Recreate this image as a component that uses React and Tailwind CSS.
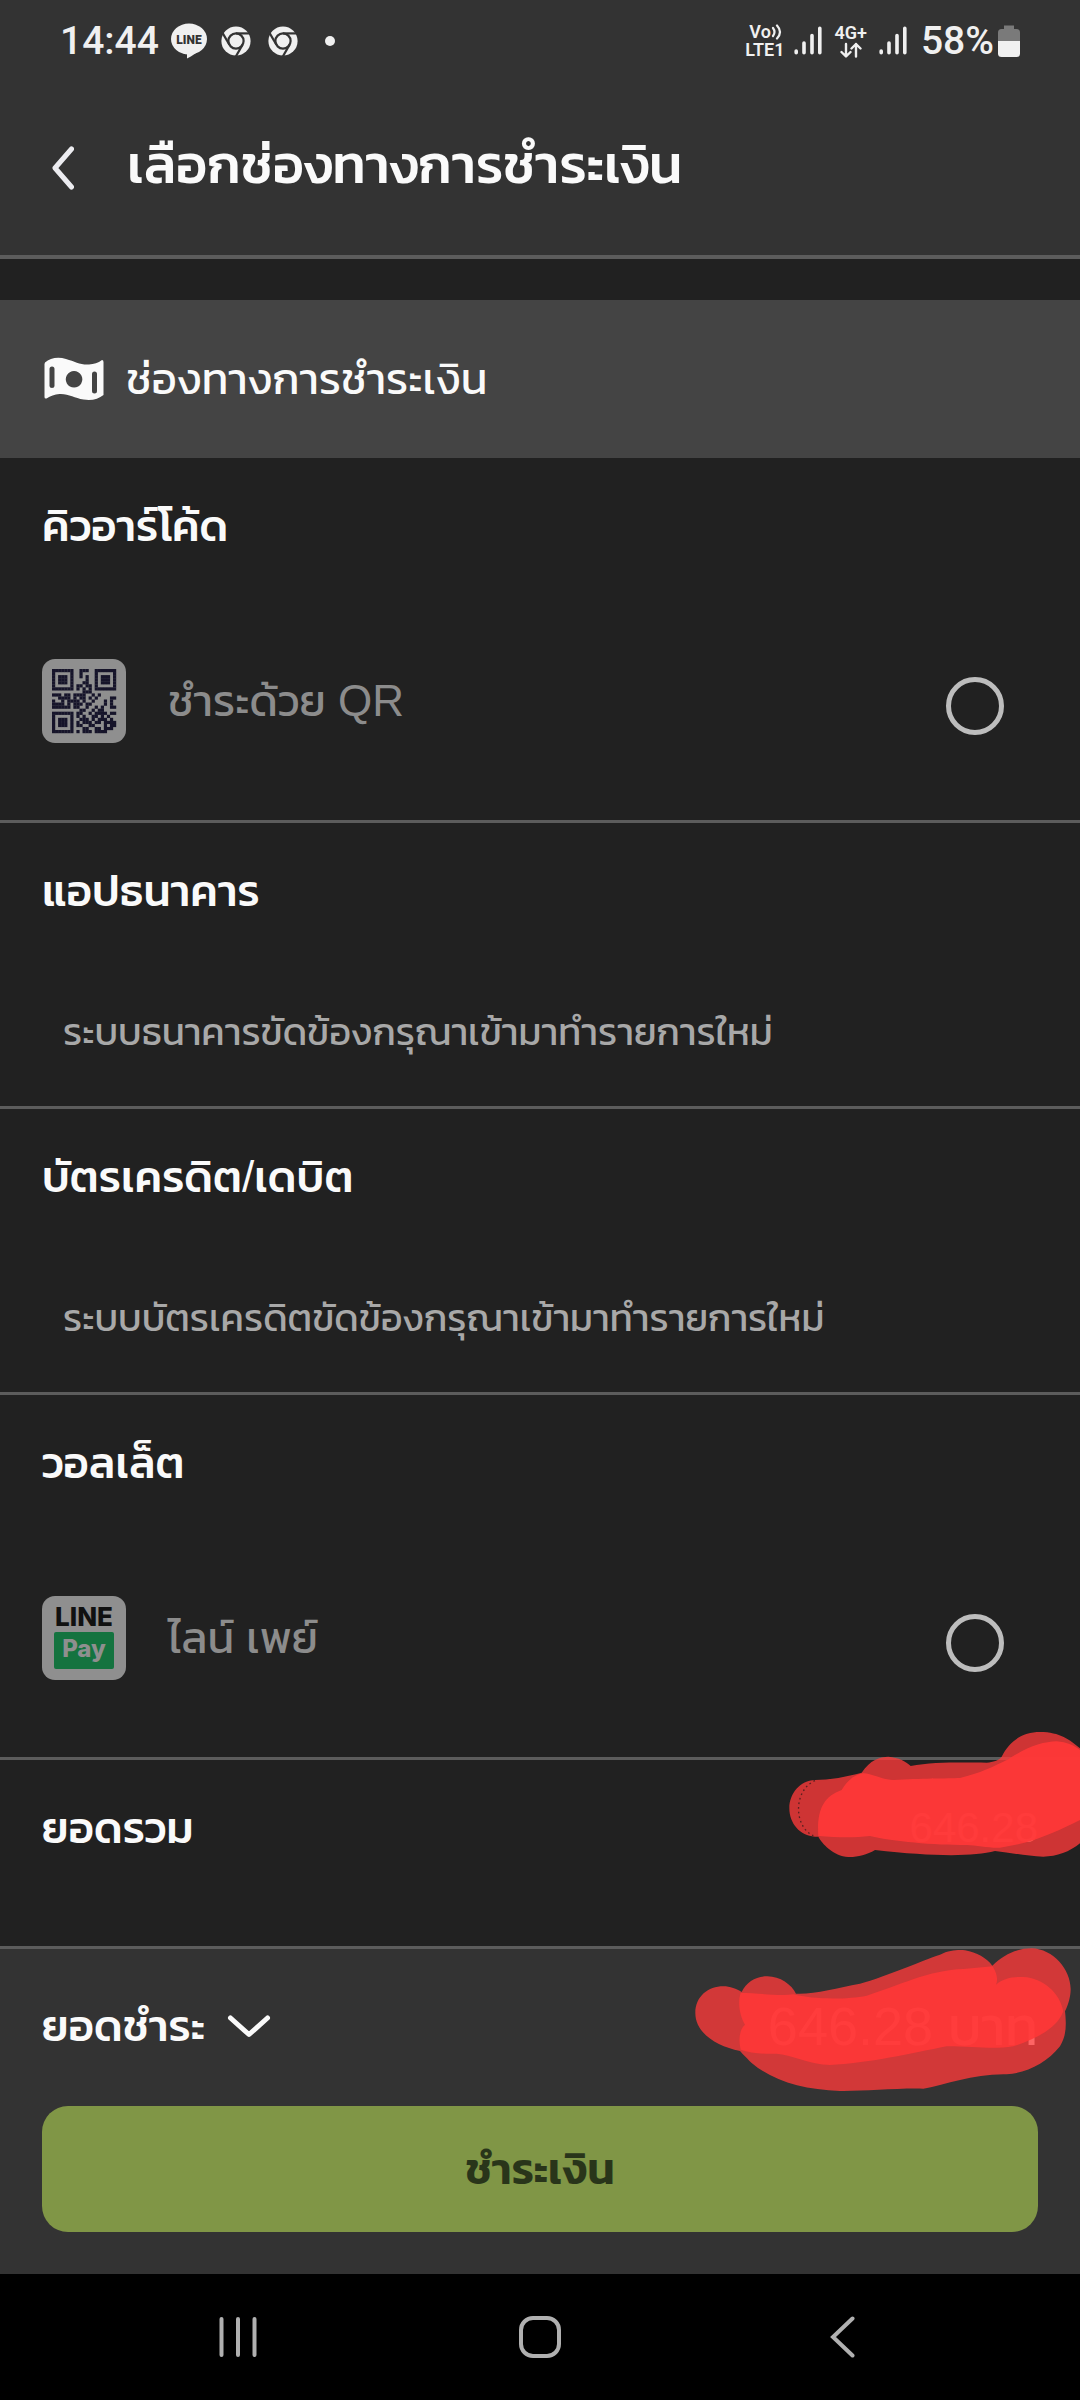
import { useState } from 'react';

const QR_ROWS = [
  '#######..###..#######',
  '#.....#..#....#.....#',
  '#.###.#..#.#..#.###.#',
  '#.###.#....#..#.###.#',
  '#.###.#...##..#.###.#',
  '#.....#.##.##.#.....#',
  '#######.#.#.#.#######',
  '..........###........',
  '###.##.####..#.#.....',
  '..####.#.##.#.#....##',
  '#..#.####.#..#...#.#.',
  '####.#.###.##....#.#.',
  '######.##..#..#.#..##',
  '.........##..#.##....',
  '#######.##..#.####.##',
  '#.....#.#.#..##.#.#..',
  '#.###.#..###.#.###.#.',
  '#.###.#.#.###.##.####',
  '#.###.#.##..##...#.##',
  '#.....#...##..##.###.',
  '#######.#.###.####...',
];

function QrIcon() {
  return (
    <svg viewBox="0 0 84 84" className="size-21 shrink-0 rounded-[13px] bg-[#8f8f8f]" aria-hidden="true">
      <g transform="translate(10 10) scale(3.050)" fill="#16142a">
        {QR_ROWS.map((row, y) =>
          row.split('').map((cell, x) =>
            cell === '#' ? <rect key={`${x}-${y}`} x={x} y={y} width="1.050" height="1.050" /> : null
          )
        )}
      </g>
    </svg>
  );
}

function LinePayIcon() {
  return (
    <svg viewBox="0 0 84 84" className="size-21 shrink-0 rounded-[13px] bg-[#8f8f8f] font-['Inter',sans-serif]" aria-hidden="true">
      <text x="42" y="30" textAnchor="middle" fontSize="26" fontWeight="800" fill="#111">LINE</text>
      <rect x="12" y="36" width="60" height="37" rx="2" fill="#14733f" />
      <text x="42" y="61" textAnchor="middle" fontSize="24" fontWeight="800" fill="#8f8f8f">Pay</text>
    </svg>
  );
}

function LineBubble() {
  return (
    <svg viewBox="0 0 36 36" className="size-9 font-['Roboto',sans-serif]" aria-hidden="true">
      <ellipse cx="18" cy="16" rx="18" ry="15.500" fill="#f0f0f0" />
      <path d="M16 30v5.500c5-2.500 10.500-6 14-10z" fill="#f0f0f0" />
      <text x="18" y="20.500" textAnchor="middle" fontSize="12" fontWeight="900" fill="#333">LINE</text>
    </svg>
  );
}

function ChromeIcon() {
  return (
    <svg viewBox="-15 -15 30 30" className="size-[30px]" aria-hidden="true">
      <circle r="14.600" fill="#f0f0f0" />
      <g fill="none" stroke="#333" strokeWidth="2.200">
        <circle r="7.600" />
        <path d="M0-7.600H15" />
        <path d="M0-7.600H15" transform="rotate(120)" />
        <path d="M0-7.600H15" transform="rotate(240)" />
      </g>
    </svg>
  );
}

function SignalBars() {
  return (
    <svg viewBox="0 0 28 30" className="h-[30px] w-7" stroke="#f0f0f0" strokeWidth="3.600" strokeLinecap="round" aria-hidden="true">
      <path d="M2.200 25v1.800M10 17v9.800M18 9.500v17.300M25.800 2.200v24.600" />
    </svg>
  );
}

function StatusBar() {
  return (
    <div className="flex h-[82px] items-center justify-between px-[60px] font-['Roboto',sans-serif] text-[#f0f0f0]">
      <div className="flex items-center">
        <span className="text-[39px] leading-none font-medium">14:44</span>
        <span className="ml-3"><LineBubble /></span>
        <span className="ml-[14px]"><ChromeIcon /></span>
        <span className="ml-[17px]"><ChromeIcon /></span>
        <span className="ml-[27px] size-[10px] rounded-full bg-[#f0f0f0]" />
      </div>
      <div className="flex items-center">
        <div className="flex flex-col text-[18px] leading-[18px] font-semibold">
          <span className="flex items-center pl-1">
            Vo
            <svg viewBox="0 0 12 16" className="h-4 w-3" fill="none" stroke="#f0f0f0" strokeWidth="2.200" strokeLinecap="round" aria-hidden="true">
              <path d="M2 4q3 4 0 8M6 1.500q6 6.500 0 13" />
            </svg>
          </span>
          <span>LTE1</span>
        </div>
        <span className="ml-[10px]"><SignalBars /></span>
        <div className="ml-3 flex flex-col items-center text-[18px] leading-[18px] font-semibold">
          <span>4G+</span>
          <svg viewBox="0 0 24 16" className="h-4 w-6" fill="none" stroke="#f0f0f0" strokeWidth="2.400" strokeLinecap="round" strokeLinejoin="round" aria-hidden="true">
            <path d="M7 2v12M2.500 10 7 14.500 11.500 10M17 14.500V2M12.500 6.500 17 2l4.500 4.500" />
          </svg>
        </div>
        <span className="ml-3"><SignalBars /></span>
        <span className="ml-[14px] text-[39px] leading-none font-medium">58%</span>
        <svg viewBox="0 0 22 34" className="ml-1 h-[34px] w-[22px]" aria-hidden="true">
          <path d="M6 1.500h10V5h2.500Q22 5 22 8.500V18H0V8.500Q0 5 3.500 5H6z" fill="#7a7a7a" />
          <path d="M0 17h22v12.500q0 3.500-3.500 3.500h-15Q0 33 0 29.500z" fill="#f0f0f0" />
        </svg>
      </div>
    </div>
  );
}

function Section({ title, children }) {
  return (
    <section className="border-b-3 border-[#5c5c5c] px-[42px] pt-[38px]">
      <h2 className="text-[44px] leading-[60px] font-medium">{title}</h2>
      {children}
    </section>
  );
}

function PaymentOption({ id, icon, label, selected, onSelect }) {
  return (
    <label htmlFor={id} className="flex items-center pt-[103px] pb-[77px]">
      {icon}
      <span className="ml-[42px] flex-1 text-[44px] leading-[84px] text-[#8c8c8c]">{label}</span>
      <input
        id={id}
        type="radio"
        name="payment"
        checked={selected === id}
        onChange={() => onSelect(id)}
        className="mt-[10px] mr-[34px] size-[58px] appearance-none rounded-full border-5 border-[#bdbdbd] checked:bg-[#809646]"
      />
    </label>
  );
}

function ErrorMessage({ children }) {
  return <p className="px-[21px] pt-[81px] pb-11 text-[38px] leading-[60px] text-[#a8a8a8]">{children}</p>;
}

function TotalScribble() {
  return (
    <svg viewBox="300 60 900 390" className="absolute right-0 -top-[30px] h-[130px] w-[300px]" aria-hidden="true">
      <path fill="#ff3a3a" fillOpacity="0.78" d="M405 210C450 210 500 200 545 188C570 150 600 140 625 140C655 142 680 155 692 168C760 155 850 158 920 158C940 156 955 152 965 140C990 90 1030 66 1080 66C1140 66 1170 90 1200 115V400C1170 425 1130 440 1090 440C1040 438 990 428 945 423C880 440 760 440 585 420C560 435 530 442 505 441C460 438 425 400 415 380H405C360 378 328 340 328 295C328 250 360 212 405 210Z" />
      <path fill="#ff3737" fillOpacity="0.92" d="M485 240C500 215 520 195 548 190C570 188 600 208 640 210C720 205 800 206 840 204C900 190 940 170 985 148C1040 110 1090 95 1130 94C1160 96 1185 108 1200 120V330C1140 360 1060 400 960 413C930 415 890 406 860 405C760 405 640 395 570 378C520 384 470 382 415 378C410 300 430 260 485 240Z" />
      <path fill="none" stroke="#5a2020" strokeWidth="4" strokeDasharray="5 9" d="M405 212C340 240 340 350 400 377" />
    </svg>
  );
}

function PayableScribble() {
  return (
    <svg viewBox="0 700 1200 450" className="absolute -top-1.5 right-0 h-[150px] w-[400px]" aria-hidden="true">
      <path fill="#ff3a3a" fillOpacity="0.78" d="M130 830C150 830 170 838 185 847C200 815 230 800 262 800C300 800 335 825 348 852C400 855 470 835 540 822C620 800 720 755 780 735C810 720 840 720 855 722C890 728 920 745 937 768C970 735 1010 716 1055 716C1120 718 1172 780 1172 838C1172 860 1165 885 1155 905C1160 950 1158 980 1140 1010C1100 1060 1040 1090 980 1094C880 1092 800 1125 730 1137C650 1135 550 1145 480 1144C370 1140 280 1115 215 1060C195 1040 185 1030 180 1024C110 1010 46 970 46 910C46 860 85 830 130 830Z" />
      <path fill="#ff3737" fillOpacity="0.88" d="M182 850C240 850 300 860 340 854C400 870 500 870 560 858C650 830 750 780 850 778L938 770C950 790 955 810 948 825C970 805 1000 801 1030 802C1090 805 1140 850 1150 905C1130 960 1060 990 1000 1010C940 1020 880 1010 800 1010C700 1030 560 1062 450 1066C390 1064 330 1035 290 1032C250 1034 210 1030 182 1020C175 990 178 960 195 945C180 920 172 880 182 850Z" />
    </svg>
  );
}

export default function App() {
  const [selected, setSelected] = useState('');

  return (
    <div className="flex min-h-screen flex-col bg-[#212121] font-['Liberation_Sans','Kanit','Prompt',sans-serif] text-[#fafafa]">
      {/* Header */}
      <header className="border-b-4 border-[#5c5c5c] bg-[#333]">
        <StatusBar />
        <div className="flex h-[173px] items-start pt-11 pl-[52px]">
          <button type="button" aria-label="ย้อนกลับ" className="pt-5">
            <svg viewBox="0 0 22 44" className="h-11 w-[22px]" fill="none" stroke="#ececf0" strokeWidth="5" strokeLinecap="round" strokeLinejoin="round">
              <path d="M19.500 3 3 22l16.500 19" />
            </svg>
          </button>
          <h1 className="ml-[53px] text-[54px] leading-[76px] font-medium">เลือกช่องทางการชำระเงิน</h1>
        </div>
      </header>

      <main className="flex-1">
        <div className="mt-[41px] flex h-[158px] items-center bg-[#444] pl-11">
          <svg viewBox="0 0 60 44" className="h-11 w-[60px]" aria-hidden="true">
            <path
              fill="#fafafa"
              fillRule="evenodd"
              d="M1 5.500C6 1 14-.500 22 2c9 2.500 14 6 23 5.500 5-.300 9-1.500 13-4.500q1.500 0 1.500 2V38c-5 4-12 6-20 4.500-9-1.500-15-6-24-5.500-5 .300-9 2-13 4.500Q.500 42 .500 40V7zM5.500 12v17q0 2 2.500 2t2.500-2V12q0-2.500-2.500-2.500T5.500 12zM48 17v17q0 2.500 2.500 2.500T53 34V17q0-2.500-2.500-2.500T48 17zM30 14a8.300 8.300 0 1 0 .1 0z"
            />
          </svg>
          <h2 className="ml-[22px] text-[44px] leading-[60px]">ช่องทางการชำระเงิน</h2>
        </div>

        <Section title="คิวอาร์โค้ด">
          <PaymentOption id="qr" icon={<QrIcon />} label="ชำระด้วย QR" selected={selected} onSelect={setSelected} />
        </Section>

        <Section title="แอปธนาคาร">
          <ErrorMessage>ระบบธนาคารขัดข้องกรุณาเข้ามาทำรายการใหม่</ErrorMessage>
        </Section>

        <Section title="บัตรเครดิต/เดบิต">
          <ErrorMessage>ระบบบัตรเครดิตขัดข้องกรุณาเข้ามาทำรายการใหม่</ErrorMessage>
        </Section>

        <Section title="วอลเล็ต">
          <PaymentOption id="line-pay" icon={<LinePayIcon />} label="ไลน์ เพย์" selected={selected} onSelect={setSelected} />
        </Section>

        <div className="relative flex h-[186px] justify-between px-[42px] pt-[38px] leading-[60px]">
          <span className="text-[44px] font-medium">ยอดรวม</span>
          <span className="text-[42px]">646.28</span>
          <TotalScribble />
        </div>
      </main>

      {/* Payment bar */}
      <footer className="border-t-3 border-[#5c5c5c] bg-[#333] px-[42px] pb-[42px]">
        <div className="relative -mx-[42px] flex h-[157px] items-center justify-between px-[42px] pb-1">
          <button type="button" className="flex items-center gap-[22px] text-[44px] leading-[60px] font-medium">
            ยอดชำระ
            <svg viewBox="0 0 44 24" className="h-6 w-11" fill="none" stroke="#fafafa" strokeWidth="5" strokeLinecap="round" strokeLinejoin="round" aria-hidden="true">
              <path d="M3.500 4 22 20.500 40.500 4" />
            </svg>
          </button>
          <span className="text-[54px] leading-[60px]">646.28 บาท</span>
          <PayableScribble />
        </div>
        <button type="button" className="h-[126px] w-full rounded-[26px] bg-[#809646] text-[44px] leading-[60px] font-semibold text-[#29351a]">
          ชำระเงิน
        </button>
      </footer>

      <nav className="flex h-[126px] items-center justify-around bg-black px-[87px]">
        <button type="button" aria-label="แอปล่าสุด">
          <svg viewBox="0 0 42 42" className="size-[42px]" stroke="#b0b0b0" strokeWidth="4" strokeLinecap="round">
            <path d="M4.500 3v36M21 3v36M37.500 3v36" />
          </svg>
        </button>
        <button type="button" aria-label="หน้าแรก">
          <svg viewBox="0 0 42 42" className="size-[42px]" fill="none" stroke="#b0b0b0" strokeWidth="4">
            <rect x="2" y="2" width="38" height="38" rx="12" />
          </svg>
        </button>
        <button type="button" aria-label="กลับ">
          <svg viewBox="0 0 42 42" className="size-[42px]" fill="none" stroke="#b0b0b0" strokeWidth="4" strokeLinecap="round">
            <path d="M31.500 2.500 12 21l19.500 18.500" />
          </svg>
        </button>
      </nav>
    </div>
  );
}
